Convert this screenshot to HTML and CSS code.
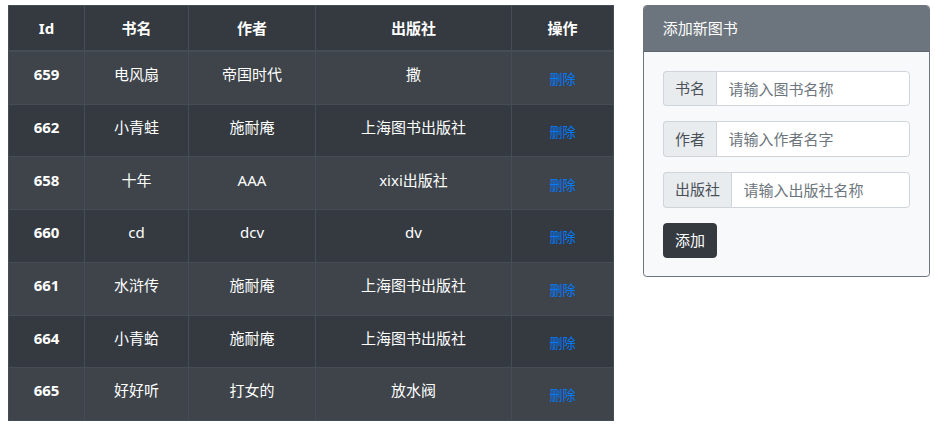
FILE: index.html
```html
<!DOCTYPE html>
<html lang="zh-CN">
<head>
<meta charset="utf-8">
<title>图书管理</title>
<link rel="stylesheet" href="styles.css">
</head>
<body>
<div class="page">
  <table class="books">
    <colgroup>
      <col class="c-id"><col class="c-name"><col class="c-author"><col class="c-pub"><col class="c-op">
    </colgroup>
    <thead>
      <tr><th>Id</th><th>书名</th><th>作者</th><th>出版社</th><th>操作</th></tr>
    </thead>
    <tbody>
      <tr><th>659</th><td>电风扇</td><td>帝国时代</td><td>撒</td><td><button class="del">删除</button></td></tr>
      <tr><th>662</th><td>小青蛙</td><td>施耐庵</td><td>上海图书出版社</td><td><button class="del">删除</button></td></tr>
      <tr><th>658</th><td>十年</td><td>AAA</td><td>xixi出版社</td><td><button class="del">删除</button></td></tr>
      <tr><th>660</th><td>cd</td><td>dcv</td><td>dv</td><td><button class="del">删除</button></td></tr>
      <tr><th>661</th><td>水浒传</td><td>施耐庵</td><td>上海图书出版社</td><td><button class="del">删除</button></td></tr>
      <tr><th>664</th><td>小青蛤</td><td>施耐庵</td><td>上海图书出版社</td><td><button class="del">删除</button></td></tr>
      <tr><th>665</th><td>好好听</td><td>打女的</td><td>放水阀</td><td><button class="del">删除</button></td></tr>
    </tbody>
  </table>

  <div class="card">
    <div class="card-header">添加新图书</div>
    <div class="card-body">
      <div class="input-group">
        <span class="addon">书名</span>
        <input class="field" type="text" placeholder="请输入图书名称">
      </div>
      <div class="input-group">
        <span class="addon">作者</span>
        <input class="field" type="text" placeholder="请输入作者名字">
      </div>
      <div class="input-group">
        <span class="addon">出版社</span>
        <input class="field" type="text" placeholder="请输入出版社名称">
      </div>
      <button class="add">添加</button>
    </div>
  </div>
</div>
</body>
</html>
```

FILE: styles.css
```css
* { box-sizing: border-box; }

html, body {
  margin: 0;
  padding: 0;
  background: #fff;
}

body {
  font-family: "Noto Sans", "Noto Sans CJK SC", sans-serif;
  font-size: 15px;
  line-height: 22.5px;
  color: #212529;
}

.page {
  display: flex;
  align-items: flex-start;
  gap: 30px;
  padding: 5px 0 0 8px;
}

/* table */
.books {
  width: 605px;
  border-collapse: collapse;
  background: #343a40;
  color: #fff;
  text-align: center;
  table-layout: fixed;
  margin-right: -1px;
}

.c-id { width: 76px; }
.c-name { width: 104px; }
.c-author { width: 127px; }
.c-pub { width: 196px; }
.c-op { width: 102px; }

.books th,
.books td {
  border: 1px solid #454d55;
  padding: 11.25px;
  vertical-align: top;
}

.books thead th {
  font-weight: 700;
  border-bottom-width: 2px;
  padding: 10.75px 11.25px;
}

.books tbody th {
  font-weight: 700;
}

.books tbody tr:nth-child(odd) {
  background: #3e444a;
}

.books td {
  font-weight: 400;
}

.del {
  font-family: inherit;
  font-size: 13.125px;
  line-height: 19.7px;
  padding: 6px 7.5px 1.5px;
  border: 0.94px solid transparent;
  background: transparent;
  color: #007bff;
  cursor: pointer;
  vertical-align: top;
}

/* card */
.card {
  width: 287px;
  border: 1px solid #6c757d;
  border-radius: 3.75px;
  overflow: hidden;
  background: #f8f9fa;
}

.card-header {
  background: #6c757d;
  color: #fff;
  padding: 11.25px 18.75px;
  border-bottom: 1px solid rgba(0, 0, 0, 0.125);
}

.card-body {
  padding: 18.75px 18.75px 17.75px;
}

.input-group {
  display: flex;
  height: 35.6px;
  margin-bottom: 15px;
}

.addon {
  display: flex;
  align-items: center;
  padding: 0 11.25px;
  background: #e9ecef;
  border: 1px solid #ced4da;
  border-right: 0;
  border-radius: 3.75px 0 0 3.75px;
  color: #495057;
  white-space: nowrap;
}

.field {
  flex: 1;
  min-width: 0;
  font-family: inherit;
  font-size: 15px;
  padding: 5.6px 11.25px;
  border: 1px solid #ced4da;
  border-radius: 0 3.75px 3.75px 0;
  background: #fff;
  color: #495057;
}

.field::placeholder {
  color: #6c757d;
}

.add {
  display: block;
  font-family: inherit;
  font-size: 15px;
  line-height: 22.5px;
  padding: 5.6px 11.25px;
  border: 1px solid #343a40;
  border-radius: 3.75px;
  background: #343a40;
  color: #fff;
  cursor: pointer;
}
```
